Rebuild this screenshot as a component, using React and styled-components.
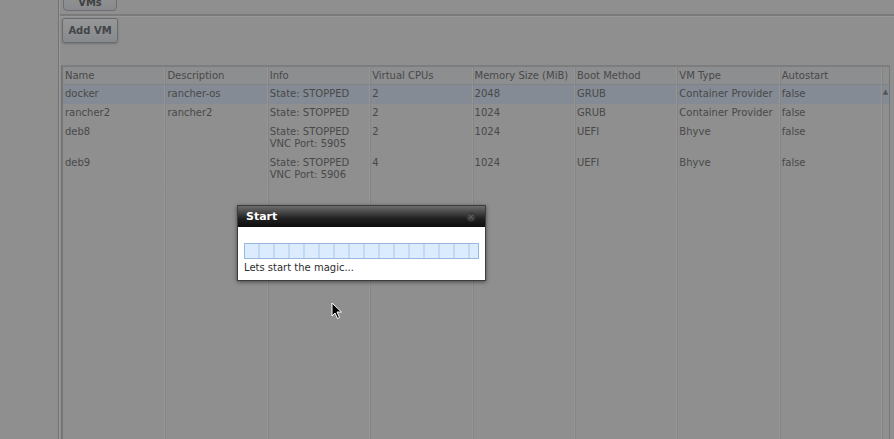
import React from "react";
import styled, { createGlobalStyle } from "styled-components";

const GlobalStyle = createGlobalStyle`
  html, body {
    margin: 0;
    padding: 0;
    background: #eeeeee;
    overflow: hidden;
  }
  body {
    font-family: "DejaVu Sans", Verdana, sans-serif;
    font-size: 10px;
    color: #7a7a7a;
  }
`;

const Page = styled.div`
  position: relative;
  width: 894px;
  height: 439px;
  display: flex;
  overflow: hidden;
  background: #eeeeee;
`;

const Sidebar = styled.div`
  width: 58px;
  flex-shrink: 0;
  border-right: 1px solid #c0c0c0;
  box-shadow: 1px 0 0 #ffffff;
`;

const Main = styled.div`
  flex: 1;
  display: flex;
  flex-direction: column;
  padding-left: 1px;
`;

const TabBar = styled.div`
  height: 14px;
  border-bottom: 2px solid #cdcdcd;
  box-shadow: 0 1px 0 #ffffff;
  padding-left: 3px;
`;

const TabButton = styled.div`
  width: 54px;
  height: 24px;
  margin-top: -13px;
  box-sizing: border-box;
  border: 1px solid #b4b8bd;
  border-radius: 0 0 4px 4px;
  background: linear-gradient(#fafbfc, #e3e6ea);
  font-weight: bold;
  color: #6c6c6c;
  text-align: center;
  line-height: 30px;
`;

const Toolbar = styled.div`
  padding: 2px 0 0 2px;
  height: 48px;
  box-sizing: border-box;
`;

const Button = styled.button`
  width: 56px;
  height: 25px;
  border: 1px solid #b0b4b9;
  border-radius: 3px;
  background: linear-gradient(#fbfcfd, #e1e6ec);
  box-shadow: 0 1px 2px rgba(0, 0, 0, 0.2);
  font-family: "DejaVu Sans", Verdana, sans-serif;
  font-size: 10px;
  font-weight: bold;
  color: #707478;
  padding: 0;
`;

const Table = styled.div`
  flex: 1;
  margin: 1px 4px 0 1px;
  border-left: 2px solid #c4c4c4;
  border-right: 1px solid #c8c8c8;
  border-top: 2px solid #d0d0d0;
  display: flex;
  flex-direction: column;
`;

const Row = styled.div`
  display: grid;
  grid-template-columns: repeat(8, 102.4px) 1fr;
  min-height: ${(p) => p.$h}px;
  background: ${(p) => (p.$selected ? "#dde8f7" : p.$header ? "#ebedef" : "transparent")};
  border-bottom: 1px solid ${(p) => (p.$header ? "#d6d9dc" : "transparent")};
`;

const Cell = styled.div`
  padding: 3px 0 0 2px;
  line-height: 12px;
  border-right: 1px solid #f8f8f8;
  box-shadow: 1px 0 0 #dedede;
  white-space: nowrap;
  overflow: hidden;
`;

const Scroll = styled.div`
  color: #8a8a8a;
  font-size: 7px;
  text-align: center;
  padding-top: 3px;
`;

const Filler = styled.div`
  flex: 1;
  display: grid;
  grid-template-columns: repeat(8, 102.4px) 1fr;
`;

const Overlay = styled.div`
  position: absolute;
  inset: 0;
  background: rgba(0, 0, 0, 0.4);
`;

const Dialog = styled.div`
  position: absolute;
  left: 237px;
  top: 205px;
  width: 249px;
  height: 76px;
  box-sizing: border-box;
  border: 1px solid #3c3c3c;
  background: #ffffff;
  box-shadow: 0 1px 4px rgba(0, 0, 0, 0.5);
  display: flex;
  flex-direction: column;
`;

const TitleBar = styled.div`
  height: 21px;
  flex-shrink: 0;
  background: linear-gradient(#6c6c6c, #3a3a3a 40%, #202020 60%, #0e0e0e);
  display: flex;
  align-items: center;
  justify-content: space-between;
  padding: 0 9px 0 8px;
  color: #ffffff;
  font-weight: bold;
  font-size: 11px;
`;

const Close = styled.span`
  width: 10px;
  height: 10px;
  display: flex;
  align-items: center;
  justify-content: center;
`;

const Body = styled.div`
  padding: 16px 6px 0 6px;
`;

const Progress = styled.div`
  height: 16px;
  box-sizing: border-box;
  border: 1px solid #98b9df;
  background-color: #d4e6fb;
  background-image: repeating-linear-gradient(
    90deg,
    #dcebfd 0px,
    #dcebfd 13px,
    #c2d8f3 13px,
    #c2d8f3 15px
  );
`;

const Message = styled.div`
  margin-top: 3px;
  color: #2e2e2e;
  font-size: 10px;
`;

const Cursor = styled.svg`
  position: absolute;
  left: 331px;
  top: 302px;
`;

const headers = [
  "Name",
  "Description",
  "Info",
  "Virtual CPUs",
  "Memory Size (MiB)",
  "Boot Method",
  "VM Type",
  "Autostart",
];

const vms = [
  ["docker", "rancher-os", ["State: STOPPED"], "2", "2048", "GRUB", "Container Provider", "false"],
  ["rancher2", "rancher2", ["State: STOPPED"], "2", "1024", "GRUB", "Container Provider", "false"],
  ["deb8", "", ["State: STOPPED", "VNC Port: 5905"], "2", "1024", "UEFI", "Bhyve", "false"],
  ["deb9", "", ["State: STOPPED", "VNC Port: 5906"], "4", "1024", "UEFI", "Bhyve", "false"],
];

export default function App() {
  return (
    <>
      <GlobalStyle />
      <Page>
        <Sidebar />
        <Main>
          <TabBar>
            <TabButton>VMs</TabButton>
          </TabBar>
          <Toolbar>
            <Button>Add VM</Button>
          </Toolbar>
          <Table>
            <Row $header $h={17}>
              {headers.map((h) => (
                <Cell key={h}>{h}</Cell>
              ))}
              <Scroll />
            </Row>
            {vms.map((vm, i) => (
              <Row key={vm[0]} $selected={i === 0} $h={vm[2].length > 1 ? 30 : 18}>
                {vm.map((v, j) => (
                  <Cell key={j}>
                    {Array.isArray(v)
                      ? v.map((line) => <div key={line}>{line}</div>)
                      : v}
                  </Cell>
                ))}
                <Scroll>{i === 0 ? "▲" : ""}</Scroll>
              </Row>
            ))}
            <Filler>
              {headers.map((h) => (
                <Cell key={h} />
              ))}
            </Filler>
          </Table>
        </Main>
        <Overlay />
        <Dialog>
          <TitleBar>
            <span>Start</span>
            <Close>
              <svg width="10" height="10" viewBox="0 0 10 10">
                <circle cx="5" cy="5" r="4.5" fill="#3a3a3a" />
                <path d="M3 3 L7 7 M7 3 L3 7" stroke="#5c5c5c" strokeWidth="1.2" />
              </svg>
            </Close>
          </TitleBar>
          <Body>
            <Progress />
            <Message>Lets start the magic...</Message>
          </Body>
        </Dialog>
        <Cursor width="12" height="18" viewBox="0 0 12 18">
          <path d="M1 1 L1 14 L4 11 L6.5 16.5 L8.5 15.5 L6 10 L10.5 10 Z" fill="#000" stroke="#fff" strokeWidth="1" />
        </Cursor>
      </Page>
    </>
  );
}
